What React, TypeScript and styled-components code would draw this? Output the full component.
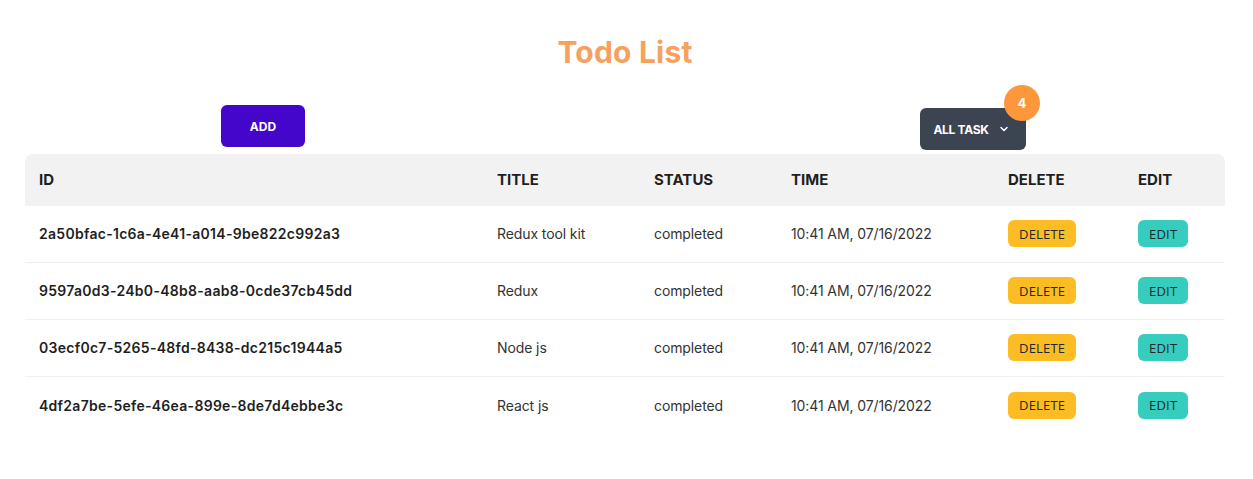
import React from "react";
import styled, { createGlobalStyle } from "styled-components";

const GlobalStyle = createGlobalStyle`
  * { box-sizing: border-box; }
  body {
    margin: 0;
    background: #ffffff;
    font-family: Inter, "Noto Sans", sans-serif;
    color: #1f2937;
  }
`;

const Page = styled.div`
  width: 1200px;
  margin-left: 25px;
  padding-top: 34px;
`;

const Heading = styled.h1`
  margin: 0;
  text-align: center;
  font-size: 30px;
  line-height: 36px;
  font-weight: 700;
  color: #f6a15e;
  letter-spacing: 0.2px;
`;

const Toolbar = styled.div`
  display: flex;
  align-items: flex-start;
  margin-top: 35px;
  height: 49px;
`;

const Button = styled.button<{ $bg: string }>`
  display: inline-flex;
  align-items: center;
  justify-content: center;
  gap: 10px;
  height: 42px;
  border: none;
  border-radius: 6px;
  background: ${(p) => p.$bg};
  color: #ffffff;
  font-family: Inter, sans-serif;
  font-size: 12px;
  font-weight: 700;
  text-transform: uppercase;
  cursor: pointer;
`;

const AddButton = styled(Button)`
  width: 84px;
  margin-left: 196px;
`;

const Indicator = styled.div`
  position: relative;
  margin-left: 615px;
  margin-top: 3px;
`;

const FilterButton = styled(Button)`
  width: 106px;
  padding: 0 3px 0 0;
  gap: 9px;
  letter-spacing: -0.3px;
`;

const Badge = styled.span`
  position: absolute;
  top: -23px;
  right: -14px;
  width: 36px;
  height: 36px;
  border-radius: 50%;
  background: #fd973b;
  color: #ffffff;
  font-size: 13px;
  font-weight: 700;
  display: flex;
  align-items: center;
  justify-content: center;
`;

const Table = styled.div`
  width: 1200px;
`;

const Row = styled.div<{ $head?: boolean; $last?: boolean }>`
  display: grid;
  grid-template-columns: 458px 157px 137px 217px 130px 101px;
  align-items: center;
  height: ${(p) => (p.$head ? "52px" : "57px")};
  padding-bottom: 1px;
  background: ${(p) => (p.$head ? "#f2f2f2" : "#ffffff")};
  border-radius: ${(p) => (p.$head ? "8px 8px 0 0" : "0")};
  border-bottom: ${(p) => (p.$head || p.$last ? "none" : "1px solid #f0f0f0")};
`;

const HeadCell = styled.div`
  padding-left: 14px;
  font-size: 15px;
  font-weight: 700;
  color: #1f1f1f;
  text-transform: uppercase;
`;

const Cell = styled.div<{ $bold?: boolean }>`
  padding-left: 14px;
  font-size: 14px;
  font-weight: ${(p) => (p.$bold ? 600 : 400)};
  letter-spacing: ${(p) => (p.$bold ? "0.28px" : "-0.1px")};
  color: ${(p) => (p.$bold ? "#1f1f1f" : "#333333")};
  white-space: nowrap;
`;

const SmallButton = styled.button<{ $bg: string }>`
  height: 27px;
  padding: 0 11px;
  border: none;
  border-radius: 6px;
  background: ${(p) => p.$bg};
  color: #1f2a2e;
  font-family: "Open Sans", sans-serif;
  font-size: 13px;
  font-weight: 500;
  letter-spacing: 0.2px;
  text-transform: uppercase;
  cursor: pointer;
`;

const todos = [
  { id: "2a50bfac-1c6a-4e41-a014-9be822c992a3", title: "Redux tool kit" },
  { id: "9597a0d3-24b0-48b8-aab8-0cde37cb45dd", title: "Redux" },
  { id: "03ecf0c7-5265-48fd-8438-dc215c1944a5", title: "Node js" },
  { id: "4df2a7be-5efe-46ea-899e-8de7d4ebbe3c", title: "React js" },
];

const Chevron = () => (
  <svg width="12" height="12" viewBox="0 0 24 24" fill="none" stroke="#fff" strokeWidth="3" strokeLinecap="round" strokeLinejoin="round">
    <path d="M6 9l6 6 6-6" />
  </svg>
);

export default function App() {
  return (
    <>
      <GlobalStyle />
      <Page>
        <Heading>Todo List</Heading>
        <Toolbar>
          <AddButton $bg="#4506cb">Add</AddButton>
          <Indicator>
            <Badge>4</Badge>
            <FilterButton $bg="#3d4451">
              All Task <Chevron />
            </FilterButton>
          </Indicator>
        </Toolbar>
        <Table>
          <Row $head>
            <HeadCell>ID</HeadCell>
            <HeadCell>Title</HeadCell>
            <HeadCell>Status</HeadCell>
            <HeadCell>Time</HeadCell>
            <HeadCell>Delete</HeadCell>
            <HeadCell>Edit</HeadCell>
          </Row>
          {todos.map((t, i) => (
            <Row key={t.id} $last={i === todos.length - 1}>
              <Cell $bold>{t.id}</Cell>
              <Cell>{t.title}</Cell>
              <Cell>completed</Cell>
              <Cell>10:41 AM, 07/16/2022</Cell>
              <Cell>
                <SmallButton $bg="#fbbd23">Delete</SmallButton>
              </Cell>
              <Cell>
                <SmallButton $bg="#37cdbe">Edit</SmallButton>
              </Cell>
            </Row>
          ))}
        </Table>
      </Page>
    </>
  );
}
